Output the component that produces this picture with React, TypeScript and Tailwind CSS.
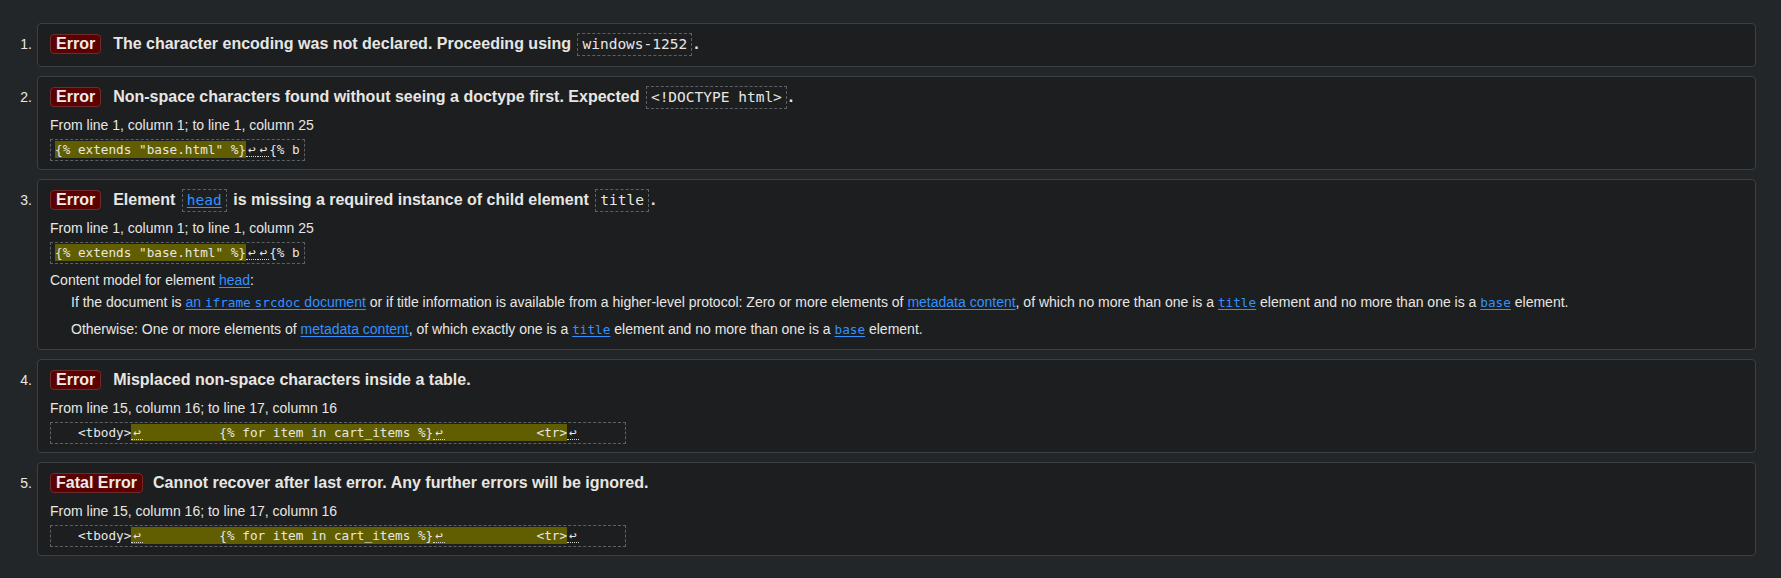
import React from "react";

const MONO = "font-['DejaVu_Sans_Mono','Liberation_Mono',monospace]";

function Badge({ children }: { children: React.ReactNode }) {
  return (
    <span className="inline-flex h-[20px] shrink-0 items-center rounded-[4px] border border-[#6e2c2c] bg-[#5c0101] px-[5px] text-[16px] font-bold leading-none text-[#f0ebe6]">
      {children}
    </span>
  );
}

// inline code box used in headings
function Code({ children, link }: { children: React.ReactNode; link?: boolean }) {
  return (
    <code
      className={`mx-[2px] inline-block border border-dashed border-[#5c6165] px-[4px] py-[2px] text-[14.5px] font-normal leading-[17px] ${MONO} ${
        link ? "text-[#3391ff] underline underline-offset-2" : ""
      }`}
    >
      {children}
    </code>
  );
}

function A({ children }: { children: React.ReactNode }) {
  return <a className="cursor-pointer text-[#3391ff] underline underline-offset-2">{children}</a>;
}

function M({ children }: { children: React.ReactNode }) {
  return <code className={`text-[12.7px] ${MONO}`}>{children}</code>;
}

function Lf() {
  return (
    <span className="inline-block w-[11.6px] border-b border-dotted border-[#d8d4cf] text-center leading-[13px]">
      ↩
    </span>
  );
}

function Hl({ children }: { children: React.ReactNode }) {
  return <span className="bg-[#605e00] py-[1px]">{children}</span>;
}

function Extract({ children }: { children: React.ReactNode }) {
  return (
    <div
      className={`mt-[4px] w-fit whitespace-pre border border-dashed border-[#5c6165] px-[4px] py-[2px] text-[12.7px] leading-[16px] ${MONO}`}
    >
      {children}
    </div>
  );
}

function Location({ children }: { children: React.ReactNode }) {
  return <p className="mt-[4px] leading-[20px]">{children}</p>;
}

function Item({ n, children }: { n: number; children: React.ReactNode }) {
  return (
    <li className="flex">
      <div className="flex h-[33px] w-[37px] shrink-0 items-end justify-end pr-[5px]">
        <span className="flex h-[24px] items-center">{n}.</span>
      </div>
      <div className="flex min-w-0 flex-1 flex-col rounded-[4px] border border-[#3c4043] bg-[#1c1e20] px-[12px] pb-[8px] pt-[8px]">
        {children}
      </div>
    </li>
  );
}

function Heading({ badge, children, gap = "ml-[12px]" }: { badge: string; children: React.ReactNode; gap?: string }) {
  return (
    <div className="mb-[2px] flex h-[24px] items-center text-[16px] font-bold">
      <Badge>{badge}</Badge>
      <span className={`${gap} whitespace-nowrap`}>{children}</span>
    </div>
  );
}

const TABLE_EXTRACT = (
  <Extract>
    {"   <tbody>"}
    <Hl>
      <Lf />
      {"          {% for item in cart_items %}"}
      <Lf />
      {"            <tr>"}
    </Hl>
    <Lf />
    {"     "}
    <span className="inline-block w-[4px]" />
  </Extract>
);

const BASE_EXTRACT = (
  <Extract>
    <Hl>{'{% extends "base.html" %}'}</Hl>
    <Lf />
    <Lf />
    {"{% b"}
  </Extract>
);

export default function App() {
  return (
    <div className="min-h-screen bg-[#232628] pb-[22px] pr-[25px] pt-[23px] font-['Liberation_Sans',Arial,sans-serif] text-[14px] text-[#e8e6e3]">
      <ol className="flex flex-col gap-[9px]">
        <Item n={1}>
          <Heading badge="Error">
            The character encoding was not declared. Proceeding using <Code>windows-1252</Code>.
          </Heading>
        </Item>

        <Item n={2}>
          <Heading badge="Error">
            Non-space characters found without seeing a doctype first. Expected <Code>{"<!DOCTYPE html>"}</Code>.
          </Heading>
          <Location>From line 1, column 1; to line 1, column 25</Location>
          {BASE_EXTRACT}
        </Item>

        <Item n={3}>
          <Heading badge="Error">
            Element <Code link>head</Code> is missing a required instance of child element <Code>title</Code>.
          </Heading>
          <Location>From line 1, column 1; to line 1, column 25</Location>
          {BASE_EXTRACT}
          <div className="mb-[1px] mt-[6px]">
            <p className="leading-[20px]">
              Content model for element <A>head</A>:
            </p>
            <div className="pl-[21px]">
              <p className="mt-[2px] whitespace-nowrap leading-[20px]">
                If the document is{" "}
                <A>
                  an <M>iframe</M> <M>srcdoc</M> document
                </A>{" "}
                or if title information is available from a higher-level protocol: Zero or more elements of{" "}
                <A>metadata content</A>, of which no more than one is a{" "}
                <A>
                  <M>title</M>
                </A>{" "}
                element and no more than one is a{" "}
                <A>
                  <M>base</M>
                </A>{" "}
                element.
              </p>
              <p className="mt-[6px] whitespace-nowrap leading-[20px]">
                Otherwise: One or more elements of <A>metadata content</A>, of which exactly one is a{" "}
                <A>
                  <M>title</M>
                </A>{" "}
                element and no more than one is a{" "}
                <A>
                  <M>base</M>
                </A>{" "}
                element.
              </p>
            </div>
          </div>
        </Item>

        <Item n={4}>
          <Heading badge="Error">Misplaced non-space characters inside a table.</Heading>
          <Location>From line 15, column 16; to line 17, column 16</Location>
          {TABLE_EXTRACT}
        </Item>

        <Item n={5}>
          <Heading badge="Fatal Error" gap="ml-[10px]">
            Cannot recover after last error. Any further errors will be ignored.
          </Heading>
          <Location>From line 15, column 16; to line 17, column 16</Location>
          {TABLE_EXTRACT}
        </Item>
      </ol>
    </div>
  );
}
